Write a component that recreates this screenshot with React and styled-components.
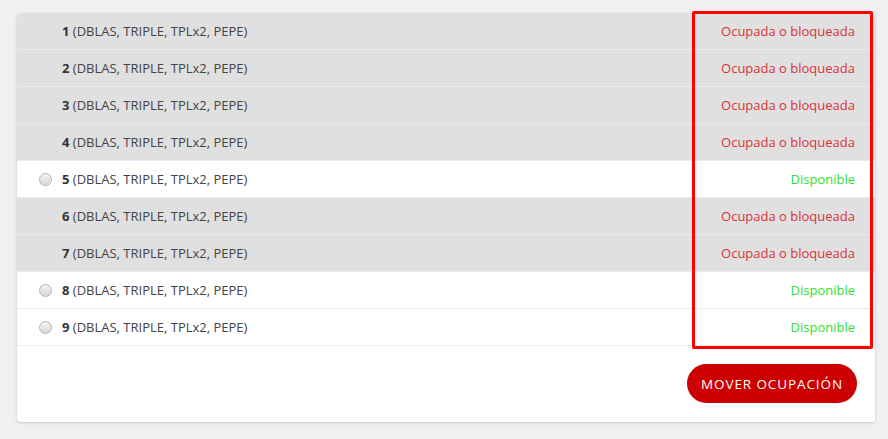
import React from "react";
import styled, { createGlobalStyle } from "styled-components";

const Global = createGlobalStyle`
  html, body { margin: 0; padding: 0; background: #eef0f2; }
  body { font-family: "Open Sans", "Noto Sans", sans-serif; }
`;

const Page = styled.div`
  padding: 13px 13px 16px 17px;
  width: 888px;
  box-sizing: border-box;
`;

const Card = styled.div`
  position: relative;
  background: #fff;
  border-radius: 3px;
  box-shadow: 0 1px 3px rgba(0, 0, 0, 0.18);
  width: 858px;
`;

const List = styled.div`
  display: flex;
  flex-direction: column;
`;

const Row = styled.label`
  display: flex;
  align-items: center;
  height: 36px;
  border-bottom: 1px solid ${(p) => (p.$disabled ? "#ebebeb" : "#ececec")};
  background: ${(p) => (p.$disabled ? "#e0e0e0" : "#ffffff")};
  padding: 0 20px 0 22px;
  font-size: 13px;
  color: #444;
  &:first-child { border-radius: 3px 3px 0 0; }
`;

const Radio = styled.span`
  width: 11px;
  height: 11px;
  border-radius: 50%;
  border: 1px solid ${(p) => (p.$disabled ? "#dcdcdc" : "#b3b3b3")};
  background: ${(p) =>
    p.$disabled ? "#e0e0e0" : "linear-gradient(#f2f2f2, #d9d9d9)"};
  margin-right: 10px;
  flex: none;
`;

const Label = styled.span`
  flex: 1;
  b { font-weight: 700; color: #333; }
`;

const Status = styled.span`
  font-size: 13px;
  color: ${(p) => (p.$free ? "#2fdf2f" : "#d9333b")};
`;

const Footer = styled.div`
  display: flex;
  justify-content: flex-end;
  padding: 18px 18px 19px;
`;

const Button = styled.button`
  height: 39px;
  padding: 0 14px;
  width: 170px;
  border: none;
  border-radius: 20px;
  background: #cc0000;
  color: #fff;
  font-family: "Open Sans", "Noto Sans", sans-serif;
  font-size: 13.5px;
  letter-spacing: 0.9px;
  cursor: pointer;
`;

const Highlight = styled.div`
  position: absolute;
  left: 675px;
  top: -2px;
  width: 175px;
  height: 332px;
  border: 3px solid #ff0000;
  border-radius: 2px;
  pointer-events: none;
`;

const rows = [
  { n: 1, free: false },
  { n: 2, free: false },
  { n: 3, free: false },
  { n: 4, free: false },
  { n: 5, free: true },
  { n: 6, free: false },
  { n: 7, free: false },
  { n: 8, free: true },
  { n: 9, free: true },
];

export default function App() {
  return (
    <Page>
      <Global />
      <Card>
        <List>
          {rows.map((r) => (
            <Row key={r.n} $disabled={!r.free}>
              <Radio $disabled={!r.free} />
              <Label>
                <b>{r.n}</b> (DBLAS, TRIPLE, TPLx2, PEPE)
              </Label>
              <Status $free={r.free}>
                {r.free ? "Disponible" : "Ocupada o bloqueada"}
              </Status>
            </Row>
          ))}
        </List>
        <Footer>
          <Button>MOVER OCUPACIÓN</Button>
        </Footer>
        <Highlight />
      </Card>
    </Page>
  );
}
